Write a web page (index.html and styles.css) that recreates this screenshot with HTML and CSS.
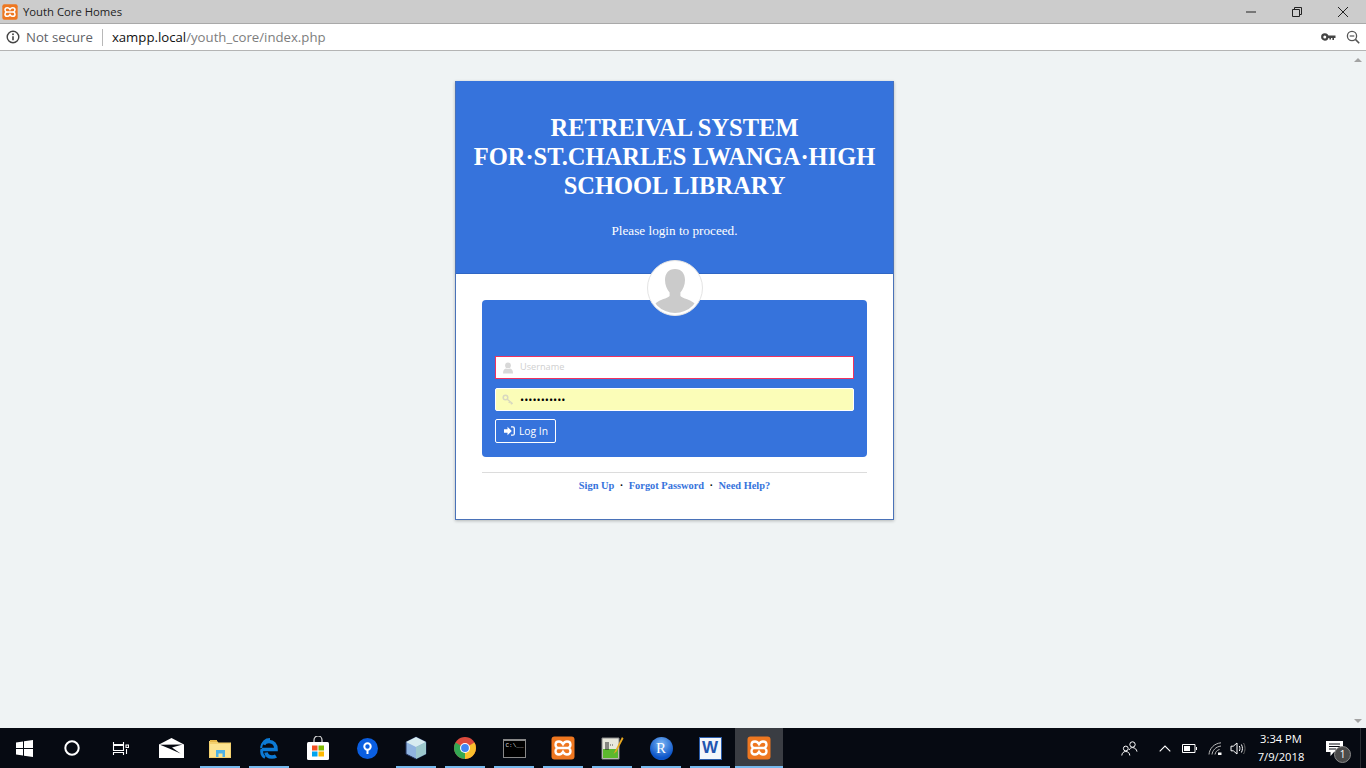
FILE: index.html
```html
<!DOCTYPE html>
<html lang="en">
<head>
    <meta charset="UTF-8">
    <title>Youth Core Homes</title>
    <link rel="stylesheet" href="styles.css">
</head>
<body>
    <svg class="defs" width="0" height="0">
        <symbol id="xampp" viewBox="0 0 24 24">
            <rect x="0.5" y="0.5" width="23" height="23" rx="3" fill="#ee7720"/>
            <path d="M12 8.200C11 6.500 10 5.500 8 5.500 5.800 5.500 4.500 7 4.500 8.800c0 1.700 1 2.800 2.500 3.200-1.500.4-2.500 1.500-2.500 3.200 0 1.800 1.300 3.300 3.500 3.300 2 0 3-1 4-2.700 1 1.700 2 2.700 4 2.700 2.200 0 3.500-1.500 3.500-3.300 0-1.700-1-2.800-2.500-3.200 1.500-.4 2.500-1.500 2.500-3.200 0-1.800-1.300-3.300-3.500-3.300-2 0-3 1-4 2.700zM7 12h10" fill="none" stroke="#fff" stroke-width="2.300"/>
        </symbol>
    </svg>

    <!-- browser title bar -->
    <div class="titlebar">
        <svg class="tab-icon" width="16" height="16"><use href="#xampp"/></svg>
        <span class="tab-title">Youth Core Homes</span>
        <div class="window-buttons">
            <svg width="12" height="12" viewBox="0 0 12 12"><path d="M1 6h10" stroke="#222" fill="none"/></svg>
            <svg width="12" height="12" viewBox="0 0 12 12"><path d="M1.500 3.500h7v7h-7zM3.500 3.500v-2h7v7h-2" stroke="#222" fill="none"/></svg>
            <svg width="12" height="12" viewBox="0 0 12 12"><path d="M1 1l10 10M11 1L1 11" stroke="#222" fill="none"/></svg>
        </div>
    </div>

    <!-- address bar -->
    <div class="addressbar">
        <svg class="info-icon" width="14" height="14" viewBox="0 0 14 14">
            <circle cx="7" cy="7" r="5.800" fill="none" stroke="#444" stroke-width="1.400"/>
            <path d="M7 6.200v4" stroke="#444" stroke-width="1.600"/>
            <circle cx="7" cy="4.200" r="0.950" fill="#444"/>
        </svg>
        <span class="not-secure">Not secure</span>
        <span class="url-divider"></span>
        <span class="url"><span class="url-host">xampp.local</span>/youth_core/index.php</span>
        <div class="address-icons">
            <svg width="15" height="10" viewBox="0 0 15 10">
                <circle cx="3.800" cy="5" r="2.600" fill="none" stroke="#444" stroke-width="2.200"/>
                <path d="M6 3.600h8.500v2.400H13V8h-1.600V6H10v1.400H8.400V6H6z" fill="#444"/>
            </svg>
            <svg width="14" height="14" viewBox="0 0 14 14">
                <circle cx="6" cy="6" r="4.600" fill="none" stroke="#555" stroke-width="1.300"/>
                <path d="M3.700 6h4.600" stroke="#555" stroke-width="1.200"/>
                <path d="M9.400 9.400l3.800 3.800" stroke="#555" stroke-width="1.600"/>
            </svg>
        </div>
    </div>

    <div class="viewport">
        <main class="page">
            <div class="login-card">
                <header class="login-header">
                    <h1>RETREIVAL SYSTEM<br>FOR&middot;ST.CHARLES LWANGA&middot;HIGH<br>SCHOOL LIBRARY</h1>
                    <p>Please login to proceed.</p>
                </header>

                <div class="login-body">
                    <!-- avatar sits over the header edge -->
                    <div class="avatar">
                        <svg width="50" height="50" viewBox="0 0 50 50">
                            <path d="M25 6c-6.500 0-10 4.600-10 11 0 5 2 9.500 4.600 12.500v3.500c-3 2.600-9 3.500-13 6.500C4.500 41 3 43.500 3 45c5 4 13.500 6 22 6s17-2 22-6c0-1.500-1.500-4-3.600-5.500-4-3-10-3.900-13-6.500v-3.500C33 26.500 35 22 35 17c0-6.400-3.500-11-10-11z" fill="#cbcbcb"/>
                        </svg>
                    </div>

                    <form class="login-panel" action="#" method="post">
                        <div class="field field-error">
                            <svg width="12" height="12" viewBox="0 0 12 12">
                                <circle cx="6" cy="3.400" r="2.900" fill="#d8d8d8"/>
                                <path d="M1 11.500c0-3 1-4.500 3-5 1.200.8 2.800.8 4 0 2 .5 3 2 3 5z" fill="#d8d8d8"/>
                            </svg>
                            <input type="text" placeholder="Username">
                        </div>
                        <div class="field field-filled">
                            <svg width="12" height="12" viewBox="0 0 12 12">
                                <circle cx="3.500" cy="3.500" r="2.300" fill="none" stroke="#d8d8c0" stroke-width="1.500"/>
                                <path d="M5.200 5.200l5.500 4.500M8 7.500l-1.200 1.400M9.800 9l-1 1.300" fill="none" stroke="#d8d8c0" stroke-width="1.400"/>
                            </svg>
                            <input class="password" type="password" value="abcdefghijk">
                        </div>
                        <button class="login-btn" type="button">
                            <svg width="11" height="10" viewBox="0 0 11 10">
                                <path d="M0 3.200h3.500V.8L7.800 5 3.500 9.200V6.800H0z" fill="#fff"/>
                                <path d="M7 .8h1.800c.9 0 1.500.6 1.500 1.500v5.400c0 .9-.6 1.500-1.500 1.500H7" fill="none" stroke="#fff" stroke-width="1.300"/>
                            </svg>
                            Log In
                        </button>
                    </form>

                    <div class="login-links">
                        <a href="#">Sign Up</a>
                        <span>&middot;</span>
                        <a href="#">Forgot Password</a>
                        <span>&middot;</span>
                        <a href="#">Need Help?</a>
                    </div>
                </div>
            </div>
        </main>

        <div class="scrollbar">
            <span class="arrow-up"></span>
            <span class="arrow-down"></span>
        </div>
    </div>

    <!-- windows taskbar -->
    <footer class="taskbar">
        <div class="task-slot sys">
            <svg width="17" height="17" viewBox="0 0 17 17"><path d="M0 2.400l7-1v6.600H0zM8 1.200L17 0v8H8zM0 9h7v6.600l-7-1zM8 9h9v8l-9-1.200z" fill="#fff"/></svg>
        </div>
        <div class="task-slot sys">
            <svg width="16" height="16" viewBox="0 0 16 16"><circle cx="8" cy="8" r="6.700" fill="none" stroke="#fff" stroke-width="2"/></svg>
        </div>
        <div class="task-slot sys">
            <svg width="17" height="16" viewBox="0 0 17 16"><path d="M1.500 2v2.500h10V2M1.500 5.500h10v5h-10zM1.500 15v-2.500h10V15M14 5h2.500v2.500H14zM14.500 9v5" fill="none" stroke="#fff" stroke-width="1.100"/></svg>
        </div>

        <div class="task-slot">
            <svg width="25" height="20" viewBox="0 0 25 20">
                <path d="M0 6.500L12.500 0 25 6.500V20H0z" fill="#fff"/>
                <path d="M1 6.800L23.500 6.500 13 9.500l8.500 6-12-5.200z" fill="#060a12"/>
            </svg>
        </div>
        <div class="task-slot running">
            <svg width="22" height="19" viewBox="0 0 22 19">
                <path d="M0 2h8l1.500 1.500H22V19H0z" fill="#f3d16f"/>
                <path d="M1 1h7v2H1z" fill="#e6b84a"/>
                <path d="M1 5h20v13H1z" fill="#fce491"/>
                <path d="M7 11h9v7h-2.500v-3.500h-4V18H7z" fill="#4db2e6"/>
            </svg>
        </div>
        <div class="task-slot running">
            <svg width="21" height="21" viewBox="0 0 21 21">
                <path d="M3 11.500h14c0-5-2.500-8-7-8-2.500 0-4.600 1-5.500 3M7 14.500c.5 3 3 4.500 6 4.500 1.800 0 3-.3 4-1" fill="none" stroke="#0c7bd6" stroke-width="3.600"/>
                <path d="M2 10c1-5 4-9 9-9" fill="none" stroke="#0c7bd6" stroke-width="2"/>
                <path d="M3 11c-1 3 0 7 3 8.500" fill="none" stroke="#0c7bd6" stroke-width="3"/>
            </svg>
        </div>
        <div class="task-slot">
            <svg width="24" height="24" viewBox="0 0 24 24">
                <path d="M8 6.500V4a4 4 0 0 1 8 0v2.500" fill="none" stroke="#ddd" stroke-width="1.200"/>
                <rect x="1" y="6" width="22" height="18" rx="1.500" fill="#fff"/>
                <rect x="6" y="9.500" width="5.500" height="5" fill="#f25022"/>
                <rect x="12.500" y="9.500" width="5.500" height="5" fill="#7fba00"/>
                <rect x="6" y="15.500" width="5.500" height="5" fill="#00a4ef"/>
                <rect x="12.500" y="15.500" width="5.500" height="5" fill="#ffb900"/>
            </svg>
        </div>
        <div class="task-slot">
            <svg width="21" height="21" viewBox="0 0 21 21">
                <circle cx="10.500" cy="10.500" r="10.500" fill="#0a5ee0"/>
                <circle cx="10.500" cy="8.500" r="3.200" fill="none" stroke="#fff" stroke-width="2"/>
                <path d="M10.500 12v4" stroke="#fff" stroke-width="2"/>
            </svg>
        </div>
        <div class="task-slot running">
            <svg width="22" height="24" viewBox="0 0 22 24">
                <path d="M11 1l10 5v12l-10 5-10-5V6z" fill="#8fb4e0" stroke="#20305a"/>
                <path d="M11 1l10 5-10 5L1 6z" fill="#d7ecf0"/>
                <path d="M11 11v12l10-5V6z" fill="#9cc8cc"/>
            </svg>
        </div>
        <div class="task-slot running">
            <svg width="22" height="22" viewBox="0 0 22 22">
                <circle cx="11" cy="11" r="11" fill="#dd4b3e"/>
                <path d="M11 11L20.500 5.500A11 11 0 0 1 11 22z" fill="#fbc02d"/>
                <path d="M11 11L11 22A11 11 0 0 1 1.500 5.500z" fill="#34a853"/>
                <circle cx="11" cy="11" r="5" fill="#fff"/>
                <circle cx="11" cy="11" r="3.900" fill="#4285f4"/>
            </svg>
        </div>
        <div class="task-slot running">
            <div class="cmd-icon">C:\<span>__</span></div>
        </div>
        <div class="task-slot running">
            <svg width="24" height="24"><use href="#xampp"/></svg>
        </div>
        <div class="task-slot running">
            <svg width="23" height="24" viewBox="0 0 23 24">
                <path d="M1 2h17v21H1z" fill="#e8e8dc" stroke="#888"/>
                <path d="M2 13h15v9H2z" fill="#5cb82e"/>
                <path d="M5 6v8M7 6v8" stroke="#222" stroke-width="1"/>
                <path d="M9 9h4" stroke="#555" stroke-width="1" stroke-dasharray="1 1"/>
                <path d="M21 1l-7 14-1.500 3 3-2.500 7-13z" fill="#e8a820"/>
            </svg>
        </div>
        <div class="task-slot running">
            <div class="r-icon">R</div>
        </div>
        <div class="task-slot running">
            <div class="word-icon">W</div>
        </div>
        <div class="task-slot running active">
            <svg width="24" height="24"><use href="#xampp"/></svg>
        </div>

        <div class="tray">
            <svg class="tray-people" width="17" height="15" viewBox="0 0 17 15">
                <circle cx="11.500" cy="3.500" r="2.700" fill="none" stroke="#fff"/>
                <path d="M8 9c.8-1.600 2-2.400 3.500-2.400 2.500 0 4 1.800 4.500 4" fill="none" stroke="#fff"/>
                <circle cx="4.800" cy="7.500" r="2.400" fill="none" stroke="#fff"/>
                <path d="M.8 14.500c.2-2.600 1.800-4 4-4s3.800 1.400 4 4" fill="none" stroke="#fff"/>
            </svg>
            <svg class="tray-caret" width="12" height="7" viewBox="0 0 12 7"><path d="M.7 6.300L6 1l5.300 5.300" fill="none" stroke="#fff" stroke-width="1.100"/></svg>
            <svg class="tray-battery" width="15" height="9" viewBox="0 0 15 9">
                <path d="M.5.500h12.500v8H.5z" fill="none" stroke="#fff"/>
                <path d="M2 2h6v5H2z" fill="#fff"/>
                <path d="M14 3h1v3h-1z" fill="#fff"/>
            </svg>
            <svg class="tray-wifi" width="14" height="13" viewBox="0 0 14 13">
                <path d="M1 12.500C1.500 6.500 6 1.500 13 .8M4 12.500C4.500 8.500 7.500 4.800 13 4M7 12.500c.4-2.400 2-4.400 4.500-5" fill="none" stroke="#bbb"/>
                <path d="M10 10.500h3.500V13H10z" fill="#fff"/>
            </svg>
            <svg class="tray-sound" width="16" height="13" viewBox="0 0 16 13">
                <path d="M1 4.200h2.300L7 1v11L3.300 8.800H1z" fill="none" stroke="#fff"/>
                <path d="M9.300 4c.8 1.500.8 3.500 0 5M11.400 2.500c1.400 2.500 1.400 5.500 0 8" fill="none" stroke="#fff"/>
                <path d="M13.500 1c2 3.300 2 7.700 0 11" fill="none" stroke="#666"/>
            </svg>
            <div class="clock"><span>3:34 PM</span><span>7/9/2018</span></div>
            <div class="notify">
                <svg width="17" height="15" viewBox="0 0 17 15"><path d="M0 0h17v11h-9l-3.500 4v-4H0z" fill="#fff"/><path d="M3 3h11M3 5.500h11M3 8h7" stroke="#060a12"/></svg>
                <span class="notify-badge">1</span>
            </div>
            <span class="show-desktop"></span>
        </div>
    </footer>
</body>
</html>
```

FILE: styles.css
```css
html, body {
    height: 100%;
}

body {
    margin: 0;
    display: flex;
    flex-direction: column;
    height: 100vh;
    overflow: hidden;
    font-family: "Open Sans", sans-serif;
    background-color: #eff3f4;
}

.defs {
    display: none;
}

/* Browser chrome */
.titlebar {
    display: flex;
    align-items: center;
    height: 23px;
    padding-left: 2px;
    background-color: #cccccc;
    border-bottom: 1px solid #a9a9a9;
}

.tab-icon {
    flex: none;
}

.tab-title {
    margin-left: 5px;
    font-size: 11.300px;
    color: #222;
}

.window-buttons {
    display: flex;
    gap: 34px;
    margin-left: auto;
    margin-right: 17px;
}

.addressbar {
    display: flex;
    align-items: center;
    height: 26px;
    padding-left: 6px;
    background-color: #fff;
    border-bottom: 1px solid #b4b4b4;
    font-size: 13.200px;
}

.not-secure {
    margin-left: 6px;
    color: #5f6368;
}

.url-divider {
    width: 1px;
    height: 17px;
    margin: 0 9px;
    background-color: #b8b8b8;
}

.url {
    color: #7d7d7d;
}

.url-host {
    color: #111;
}

.address-icons {
    display: flex;
    align-items: center;
    gap: 10px;
    margin-left: auto;
    margin-right: 6px;
}

/* Page */
.viewport {
    flex: 1;
    display: flex;
    min-height: 0;
}

.page {
    flex: 1;
    padding-top: 30px;
}

.scrollbar {
    width: 17px;
    display: flex;
    flex-direction: column;
    align-items: center;
    justify-content: space-between;
    padding: 7px 0 5px;
    box-sizing: border-box;
}

.arrow-up {
    border-left: 4px solid transparent;
    border-right: 4px solid transparent;
    border-bottom: 4px solid #a3a3a3;
}

.arrow-down {
    border-left: 4px solid transparent;
    border-right: 4px solid transparent;
    border-top: 4px solid #a3a3a3;
}

/* Login card */
.login-card {
    width: 439px;
    height: 439px;
    box-sizing: border-box;
    margin: 0 auto;
    background-color: #fff;
    border: 1px solid #4a72b8;
    border-top: 0;
    box-shadow: 0 1px 3px rgba(0, 0, 0, 0.25);
}

.login-header {
    height: 193px;
    box-sizing: border-box;
    padding-top: 32px;
    background-color: #3673dc;
    border-bottom: 1px solid #2f66c4;
    color: #fff;
    text-align: center;
    font-family: "Liberation Serif", serif;
}

.login-header h1 {
    margin: 0;
    font-size: 24.500px;
    line-height: 29px;
    font-weight: bold;
}

.login-header p {
    margin: 23px 0 0;
    font-size: 13.200px;
    line-height: 15px;
}

.login-body {
    position: relative;
    padding: 26px 26px 0;
}

.avatar {
    position: absolute;
    top: -14px;
    left: 191px;
    width: 56px;
    height: 56px;
    box-sizing: border-box;
    padding: 2px;
    background-color: #fff;
    border: 1px solid #e4e4e4;
    border-radius: 50%;
}

.avatar svg {
    display: block;
    border-radius: 50%;
}

.login-panel {
    height: 157px;
    box-sizing: border-box;
    padding: 56px 13px 0;
    background-color: #3673dc;
    border-radius: 4px;
}

.field {
    display: flex;
    align-items: center;
    gap: 6px;
    height: 23px;
    box-sizing: border-box;
    padding-left: 6px;
    margin-bottom: 9px;
    background-color: #fff;
    border: 1px solid #fff;
    border-radius: 2px;
}

.field svg {
    flex: none;
}

.field-error {
    border-color: #f0325f;
    border-radius: 0;
}

.field-filled {
    background-color: #fbfdb8;
}

.field input {
    flex: 1;
    min-width: 0;
    padding: 0 0 2px;
    border: 0;
    outline: none;
    background: transparent;
    font-family: "Open Sans", sans-serif;
    font-size: 9.200px;
    color: #111;
}

.field input.password {
    padding-bottom: 0;
    font-size: 11px;
    color: #000;
}

.field input::placeholder {
    color: #cfcfcf;
}

.login-btn {
    display: flex;
    align-items: center;
    gap: 4px;
    width: 61px;
    height: 24px;
    box-sizing: border-box;
    margin-top: -1px;
    padding: 0 0 0 8px;
    background: transparent;
    border: 1px solid #fff;
    border-radius: 2px;
    color: #fff;
    font-family: "Open Sans", sans-serif;
    font-size: 10.300px;
}

.login-links {
    margin-top: 15px;
    padding-top: 6px;
    border-top: 1px solid #dcdcdc;
    display: flex;
    justify-content: center;
    gap: 5.500px;
    font-family: "Liberation Serif", serif;
    font-size: 10.400px;
    line-height: 14px;
    font-weight: bold;
}

.login-links a {
    color: #3673dc;
    text-decoration: none;
}

/* Taskbar */
.taskbar {
    display: flex;
    flex: none;
    height: 40px;
    background-color: #060a12;
}

.task-slot {
    position: relative;
    flex: none;
    width: 49px;
    box-sizing: border-box;
    padding-right: 1px;
    display: flex;
    align-items: center;
    justify-content: center;
}

.task-slot.sys {
    width: 48px;
    padding-right: 0;
}

.task-slot.sys + .task-slot:not(.sys) {
    margin-left: 3px;
}

.task-slot.running::after {
    content: "";
    position: absolute;
    left: 4px;
    right: 5px;
    bottom: 0;
    height: 2px;
    background-color: #76b9ed;
}

.task-slot.active {
    width: 48px;
    padding-right: 0;
    background-color: #3a3d43;
}

.task-slot.active::after {
    left: 0;
    right: 0;
}

.cmd-icon {
    width: 23px;
    height: 19px;
    box-sizing: border-box;
    padding: 1px 0 0 2px;
    background-color: #000;
    border: 1px solid #888;
    border-top-width: 2px;
    color: #ddd;
    font-family: "Liberation Mono", monospace;
    font-size: 6px;
    line-height: 7px;
}

.r-icon {
    width: 23px;
    height: 23px;
    border-radius: 50%;
    background: radial-gradient(circle at 50% 30%, #7db8f5, #0c55c8 70%);
    color: #fff;
    font-family: "Liberation Serif", serif;
    font-size: 15px;
    line-height: 23px;
    text-align: center;
}

.word-icon {
    width: 21px;
    height: 21px;
    background-color: #f2f6fb;
    border: 1px solid #2a5caa;
    color: #1f55b0;
    font-family: "Liberation Sans", sans-serif;
    font-size: 17px;
    font-weight: bold;
    line-height: 19px;
    text-align: center;
}

.tray {
    flex: 1;
    display: flex;
    align-items: center;
    color: #fff;
}

.tray-people {
    margin-left: 338px;
}

.tray-caret {
    margin-left: 21px;
}

.tray-battery {
    margin-left: 11px;
}

.tray-wifi {
    margin-left: 11px;
}

.tray-sound {
    margin-left: 8px;
}

.clock {
    width: 70px;
    display: flex;
    flex-direction: column;
    align-items: center;
    gap: 2px;
    font-size: 11.200px;
    line-height: 16px;
}

.notify {
    position: relative;
    margin-left: 10px;
    display: flex;
}

.notify-badge {
    position: absolute;
    right: -8px;
    bottom: -7px;
    width: 15px;
    height: 15px;
    border-radius: 50%;
    background-color: #4a4a4a;
    border: 1px solid #8a8a8a;
    font-size: 10px;
    line-height: 15px;
    text-align: center;
}

.show-desktop {
    width: 1px;
    height: 100%;
    margin-left: auto;
    margin-right: 5px;
    background-color: #2a2d33;
}
```
